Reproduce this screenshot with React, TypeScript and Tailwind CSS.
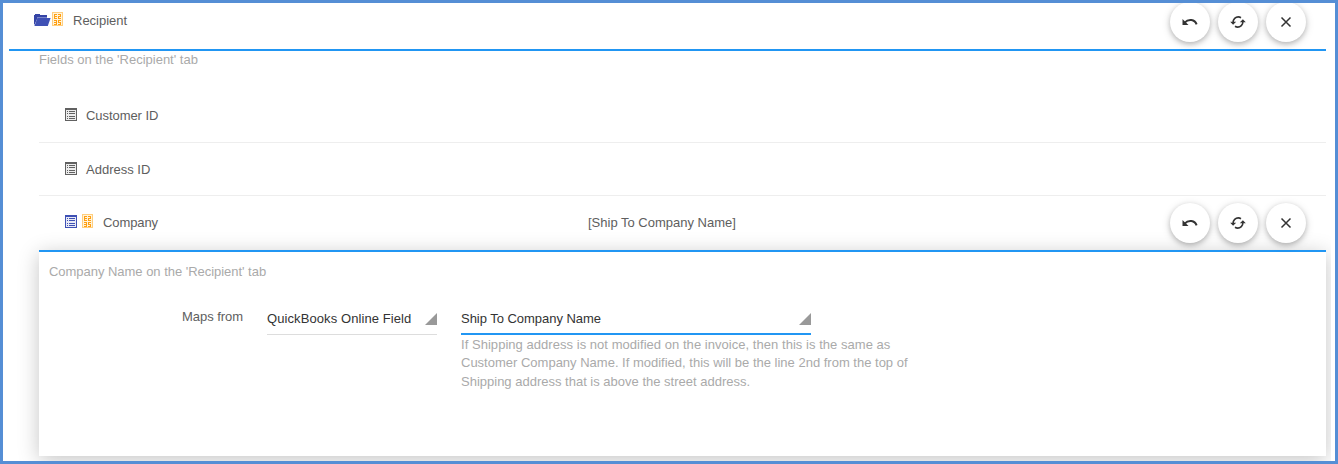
import type { ReactNode } from "react";

function FolderIcon() {
  return (
    <svg width="17" height="12" viewBox="0 0 17 12" className="shrink-0">
      <path d="M0 10.5V1h1V0h5v1h7v3H3.5L.6 10.5z" fill="#3544a6" />
      <path d="M3.4 4H16.6L13.8 12H.4z" fill="#3f51b5" />
      <path d="M3 3.5h10" stroke="#aab2dd" strokeWidth=".6" />
    </svg>
  );
}

function DigitsIcon() {
  return (
    <svg width="11" height="14" viewBox="0 0 11 14" shapeRendering="crispEdges" className="shrink-0">
      <path d="M0 0h11v14H0z" fill="#ffcf80" />
      <path d="M1 1h9v12H1z" fill="#fff3dc" />
      <path
        d="M2 2h3v1H3v1h2v1H3v1h2v1H2zM6 2h3v3H7v1h2v1H6V4h2V3H6zM2 8h3v5H2v-1h2v-1H2v-1h2V9H2zM6 8h3v1H7v1h2v3H6v-1h2v-1H6z"
        fill="#ff9f10"
      />
    </svg>
  );
}

function FormIcon({ active = false }: { active?: boolean }) {
  const c = active ? "#3f51b5" : "#616161";
  return (
    <svg width="12" height="13" viewBox="0 0 12 13" shapeRendering="crispEdges" className="shrink-0">
      <path d="M0 0h12v13H0zM1 2v10h10V2z" fill={c} fillRule="evenodd" />
      <path d="M1 2h10v10H1z" fill={c} fillOpacity=".12" />
      <path d="M2 3h1v1H2zM4 3h6v1H4zM2 5h1v1H2zM4 5h6v1H4zM2 8h1v1H2zM4 8h6v1H4zM2 10h1v1H2zM4 10h6v1H4z" fill={c} />
    </svg>
  );
}

function UndoIcon() {
  return (
    <svg width="16" height="16" viewBox="0 0 16 16">
      <path d="M.5 5v6h6z" fill="currentColor" />
      <path d="M2.6 8.6C6.6 4.4 12.8 5.2 14.6 10.4" fill="none" stroke="currentColor" strokeWidth="2" />
    </svg>
  );
}

function RefreshIcon() {
  return (
    <svg width="16" height="16" viewBox="0 0 16 16" fill="none" stroke="currentColor" strokeWidth="1.6">
      <path d="M3.1 8.5C3 5.1 5.7 2.9 8.3 2.9c1 0 1.9.3 2.7.8" />
      <path d="M12.9 7.5c.1 3.4-2.6 5.6-5.2 5.6-1 0-1.9-.3-2.7-.8" />
      <path d="M.2 7.7h6L3.1 10.8zM9.8 8.3h6l-2.9-3.1z" fill="currentColor" stroke="none" />
    </svg>
  );
}

function CloseIcon() {
  return (
    <svg width="16" height="16" viewBox="0 0 16 16">
      <path d="M3.5 3.5l9 9M12.5 3.5l-9 9" stroke="currentColor" strokeWidth="1.5" />
    </svg>
  );
}

function RoundButton({ label, children }: { label: string; children: ReactNode }) {
  return (
    <button
      aria-label={label}
      className="flex size-10 items-center justify-center rounded-full bg-white text-[#333] shadow-[0_2px_5px_rgba(0,0,0,0.2),0_2px_10px_rgba(0,0,0,0.14)]"
    >
      {children}
    </button>
  );
}

function Actions() {
  return (
    <div className="ml-auto flex gap-2 pr-5">
      <RoundButton label="Undo"><UndoIcon /></RoundButton>
      <RoundButton label="Refresh"><RefreshIcon /></RoundButton>
      <RoundButton label="Remove"><CloseIcon /></RoundButton>
    </div>
  );
}

function Select({ value, className }: { value: string; className: string }) {
  return (
    <div className={`flex h-[30px] justify-between text-[#333] ${className}`}>
      <span className="pt-[5px]">{value}</span>
      <svg width="12" height="12" viewBox="0 0 12 12" className="mt-2"><path d="M12 0v12H0z" fill="#999" /></svg>
    </div>
  );
}

export default function App() {
  return (
    <div className="h-[464px] w-[1338px] overflow-hidden border-[3px] border-[#558ed5] bg-white font-['Liberation_Sans',Arial,sans-serif] text-[13px] leading-[18px] text-[#5e5e5e]">
      <div className="h-full w-[1328px] overflow-hidden pl-1.5 pr-[5px]">
        <header className="flex h-12 items-start border-b-2 border-[#2196f3]">
          <div className="flex pl-[25px] pt-[9px]">
            <div className="flex gap-px">
              <div className="pt-0.5"><FolderIcon /></div>
              <DigitsIcon />
            </div>
            <span className="pl-2.5">Recipient</span>
          </div>
          <div className="-mt-px ml-auto"><Actions /></div>
        </header>
        <p className="h-[37px] pl-[30px] text-[#aaa]">Fields on the 'Recipient' tab</p>
        <div className="ml-[30px]">
          <div className="flex h-[55px] items-center gap-[9px] border-b border-[#eee] pl-[26px]">
            <div className="-mt-0.5"><FormIcon /></div><span className="pt-px tracking-[-0.06px]">Customer ID</span>
          </div>
          <div className="flex h-[53px] items-center gap-[9px] border-b border-[#eee] pb-px pl-[26px]">
            <FormIcon /><span className="pt-0.5">Address ID</span>
          </div>
          <div className="relative flex h-[54px] items-center pl-[26px]">
            <div className="-mt-[3px]"><FormIcon active /></div>
            <div className="-mt-1 ml-[5px]"><DigitsIcon /></div>
            <span className="ml-2.5 w-[485px] tracking-[-0.1px]">Company</span>
            <span>[Ship To Company Name]</span>
            <Actions />
          </div>
          <section className="h-[206px] border-t-2 border-[#2196f3] bg-white px-2.5 pt-[11px] shadow-[0_4px_20px_rgba(0,0,0,0.23)]">
            <p className="tracking-[-0.03px] text-[#aaa]">Company Name on the 'Recipient' tab</p>
            <div className="mt-6 flex">
              <span className="w-[194px] pt-[3px] text-right tracking-[-0.05px]">Maps from</span>
              <Select value="QuickBooks Online Field" className="ml-6 w-[170px] border-b border-[#ddd] tracking-[0.09px]" />
              <div className="ml-6 w-[460px]">
                <Select value="Ship To Company Name" className="w-[350px] border-b-2 border-[#2196f3] tracking-[-0.03px]" />
                <p className="pt-[0.7px] leading-[18.4px] text-[#aaa]">
                  <span className="tracking-[0.04px]">If Shipping address is not modified on the invoice, then this is the same as</span>{" "}
                  Customer Company Name. If modified, this will be the line 2nd from the top of Shipping address that is above the street address.
                </p>
              </div>
            </div>
          </section>
        </div>
      </div>
    </div>
  );
}
